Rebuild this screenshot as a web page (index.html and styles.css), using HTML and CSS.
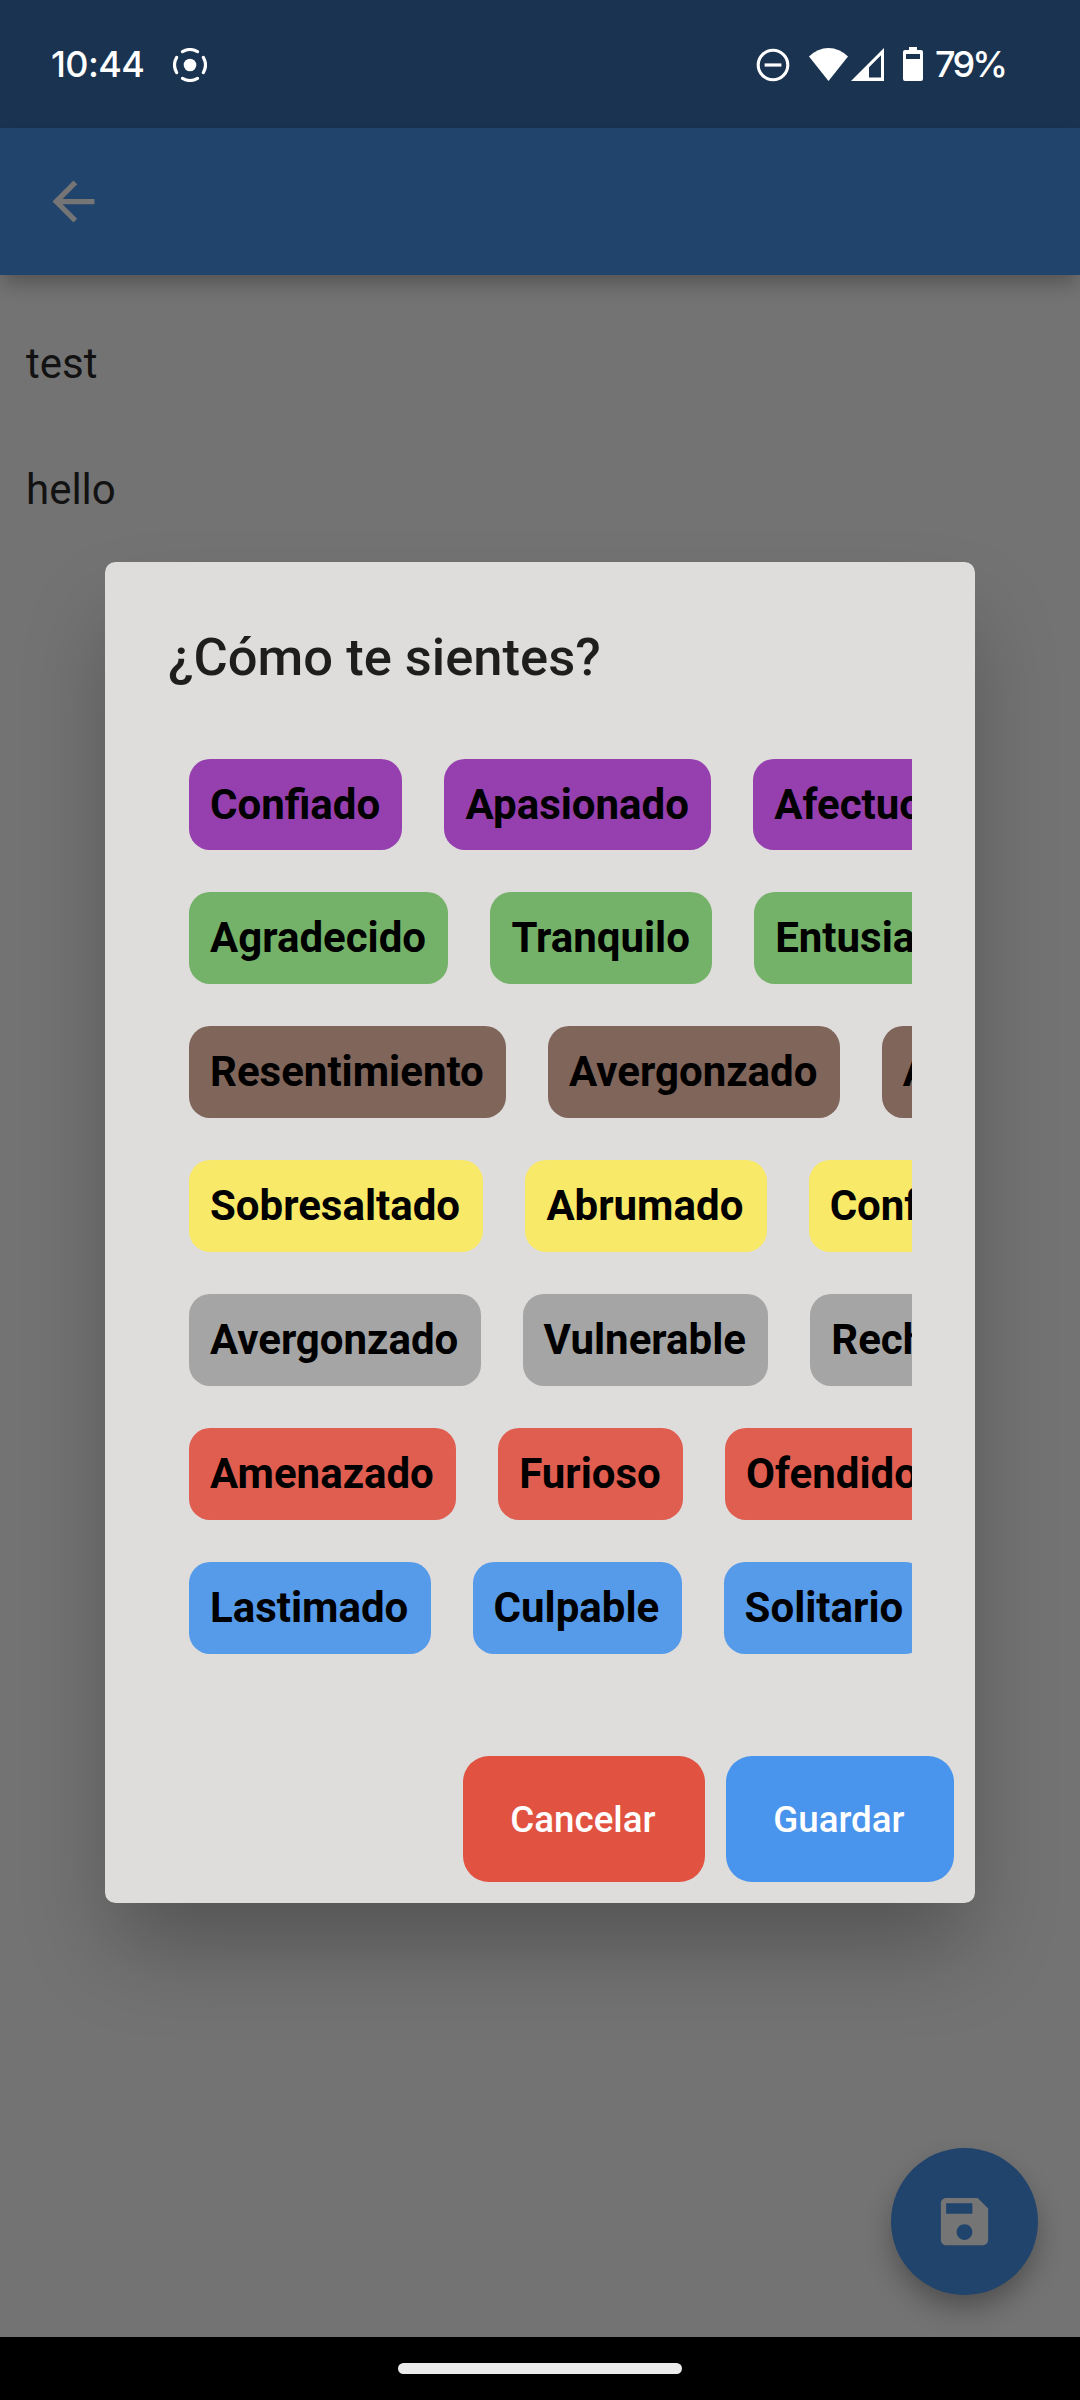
FILE: index.html
```html
<!DOCTYPE html>
<html lang="es">
<head>
<meta charset="utf-8">
<title>¿Cómo te sientes?</title>
<link rel="stylesheet" href="styles.css">
</head>
<body>
<div class="screen">
  <header class="status-bar">
    <div class="status-left">
      <span class="clock">10:44</span>
      <svg class="icon-cast" viewBox="0 0 34 34">
        <circle cx="17" cy="17" r="6.3" fill="#fff"/>
        <path d="M9.5 3.6A15.3 15.3 0 0 1 24.5 3.6M9.5 30.4A15.3 15.3 0 0 0 24.5 30.4M3.6 9.5A15.3 15.3 0 0 0 3.6 24.5M30.4 9.5A15.3 15.3 0 0 1 30.4 24.5" fill="none" stroke="#fff" stroke-width="3.2" stroke-linecap="round"/>
      </svg>
    </div>
    <div class="status-right">
      <svg class="icon-dnd" viewBox="0 0 34 34">
        <circle cx="17" cy="17" r="14.8" fill="none" stroke="#fff" stroke-width="3.1"/>
        <path d="M8.6 17H25.4" stroke="#fff" stroke-width="3.2"/>
      </svg>
      <svg class="icon-wifi" viewBox="0 0 39 33"><path d="M0 8.6Q8.5 0 19.5 0T39 8.6L19.5 33Z" fill="#fff"/></svg>
      <svg class="icon-signal" viewBox="0 0 33 33"><path fill-rule="evenodd" d="M33 0V33H0ZM30 7.2L18 19.2V29.5H30Z" fill="#fff"/></svg>
      <svg class="icon-battery" viewBox="0 0 20 34"><path fill-rule="evenodd" d="M6 0H14V3H18Q20 3 20 5V32Q20 34 18 34H2Q0 34 0 32V5Q0 3 2 3H6ZM3 7V12H17V7Z" fill="#fff"/></svg>
      <span class="battery-level">79%</span>
    </div>
  </header>
  <nav class="app-bar">
    <svg class="icon-back" viewBox="0 0 24 24"><path d="M20 11H7.83l5.59-5.59L12 4l-8 8 8 8 1.41-1.41L7.83 13H20z"/></svg>
  </nav>
  <main class="note">
    <p class="note-line">test</p>
    <p class="note-line">hello</p>
    <button class="fab" aria-label="Guardar nota">
      <svg class="icon-save" viewBox="0 0 24 24"><path d="M17 3H5c-1.11 0-2 .9-2 2v14c0 1.1.89 2 2 2h14c1.1 0 2-.9 2-2V7l-4-4zm-5 16c-1.66 0-3-1.34-3-3s1.34-3 3-3 3 1.34 3 3-1.34 3-3 3zm3-10H5V5h10v4z"/></svg>
    </button>
  </main>
  <footer class="nav-bar"><span class="nav-pill"></span></footer>

  <section class="dialog" role="dialog">
    <h1 class="dialog-title">¿Cómo te sientes?</h1>
    <div class="mood-list">
      <div class="mood-row purple"><span class="chip">Confiado</span><span class="chip">Apasionado</span><span class="chip">Afectuoso</span></div>
      <div class="mood-row green"><span class="chip">Agradecido</span><span class="chip">Tranquilo</span><span class="chip">Entusiasmado</span></div>
      <div class="mood-row brown"><span class="chip">Resentimiento</span><span class="chip">Avergonzado</span><span class="chip">Asqueado</span></div>
      <div class="mood-row yellow"><span class="chip">Sobresaltado</span><span class="chip">Abrumado</span><span class="chip">Confundido</span></div>
      <div class="mood-row gray"><span class="chip">Avergonzado</span><span class="chip">Vulnerable</span><span class="chip">Rechazado</span></div>
      <div class="mood-row red"><span class="chip">Amenazado</span><span class="chip">Furioso</span><span class="chip">Ofendido</span></div>
      <div class="mood-row blue"><span class="chip">Lastimado</span><span class="chip">Culpable</span><span class="chip">Solitario</span></div>
    </div>
    <div class="dialog-actions">
      <button class="action cancel">Cancelar</button>
      <button class="action save">Guardar</button>
    </div>
  </section>
</div>
</body>
</html>
```
FILE: styles.css
```css
* { box-sizing: border-box; }

body {
  margin: 0;
  font-family: Roboto, "Liberation Sans", sans-serif;
}

svg { display: block; flex: none; }

.screen {
  position: relative;
  display: flex;
  flex-direction: column;
  width: 1080px;
  height: 2400px;
  overflow: hidden;
  background: #737373;
}

/* System status bar */
.status-bar {
  display: flex;
  justify-content: space-between;
  height: 128px;
  padding: 0 76px 0 51px;
  background: #193350;
  color: #fff;
  font-family: Inter, Roboto, sans-serif;
  font-size: 36px;
  font-weight: 500;
  line-height: 128px;
}
.status-left, .status-right { display: flex; align-items: center; }
.clock { width: 122px; letter-spacing: -0.6px; }
.icon-cast, .icon-dnd { width: 34px; height: 34px; }
.icon-cast { margin-top: 2px; }
.icon-dnd { margin: 1px 19px 0 0; }
.icon-wifi { width: 39px; height: 33px; margin-right: 3px; }
.icon-signal { width: 33px; height: 33px; margin-right: 19px; }
.icon-battery { width: 20px; height: 34px; margin-right: 12px; }
.battery-level { width: 69px; white-space: nowrap; letter-spacing: -2.8px; }

/* App bar */
.app-bar {
  z-index: 1;
  display: flex;
  align-items: center;
  height: 147px;
  padding-left: 42px;
  background: #21446d;
  box-shadow: 0 11px 18px -3px rgba(0, 0, 0, 0.27);
}
.icon-back { width: 63px; height: 63px; fill: #757575; }

/* Note content */
.note {
  position: relative;
  flex: 1;
  padding: 25.7px 26px 0;
}
.note-line {
  margin: 0;
  color: #121212;
  font-size: 42px;
  line-height: 126px;
}
.fab {
  position: absolute;
  right: 42px;
  bottom: 42px;
  display: grid;
  place-items: center;
  width: 147px;
  height: 147px;
  padding: 0;
  border: 0;
  border-radius: 50%;
  background: #21446d;
  box-shadow: 0 14px 28px -2px rgba(0, 0, 0, 0.32);
}
.icon-save { width: 63px; height: 63px; fill: #757575; }

/* Gesture navigation */
.nav-bar {
  display: flex;
  justify-content: center;
  height: 63px;
  padding-top: 26px;
  background: #000;
}
.nav-pill {
  width: 284px;
  height: 11px;
  border-radius: 6px;
  background: #ebebeb;
}

/* Mood dialog */
.dialog {
  position: absolute;
  z-index: 2;
  top: 562px;
  left: 105px;
  width: 870px;
  height: 1341px;
  padding: 63px 0 0;
  border-radius: 10.5px;
  background: #dedddb;
  box-shadow: 0 52px 90px -10px rgba(0, 0, 0, 0.28);
}
.dialog-title {
  margin: 0 63px 68.55px;
  color: #1e1e1d;
  font-size: 52.5px;
  font-weight: 500;
  line-height: 65px;
}
.mood-list {
  display: flex;
  flex-direction: column;
  gap: 42px;
  margin: 0 63px;
  overflow: hidden;
}
.mood-row {
  display: flex;
  gap: 42px;
  padding-left: 21px;
}
.chip {
  flex: none;
  padding: 21px 22.3px 21px 21px;
  border-radius: 21px;
  color: #000;
  font-size: 42px;
  font-weight: 700;
  line-height: 49.9px;
  white-space: nowrap;
}
.purple .chip { background: #963fae; }
.green .chip { background: #73b268; }
.brown .chip { background: #80655a; }
.yellow .chip { padding-right: 23.3px; background: #f9e969; }
.gray .chip { background: #a5a5a5; }
.red .chip { background: #e05e50; }
.blue .chip { background: #559be9; }

.dialog-actions {
  display: flex;
  justify-content: flex-end;
  gap: 21px;
  padding: 102.6px 21px 0;
}
.action {
  height: 126px;
  padding: 0 49.4px 0 47.25px;
  border: 0;
  border-radius: 26px;
  color: #fff;
  font: 500 36.75px/127px Roboto, sans-serif;
}
.cancel { background: #e15241; }
.save { background: #4994ec; }
```
